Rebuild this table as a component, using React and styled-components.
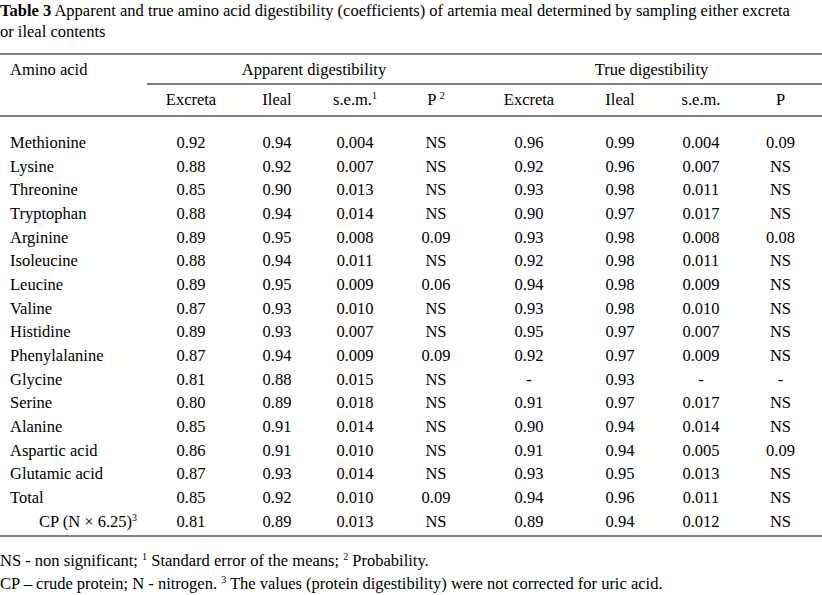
import React from 'react'
import styled, { createGlobalStyle, css } from 'styled-components'

const GlobalStyle = createGlobalStyle`
    body {
        margin: 0;
        background: #ffffff;
    }
`

const serif = css`
    font-family: "Liberation Serif", serif;
    font-size: 16.5px;
    color: #000;
`

const COLS = '147px 88px 84px 72px 90px 96px 86px 76px 83px'

const rows = [
    ['Methionine', '0.92', '0.94', '0.004', 'NS', '0.96', '0.99', '0.004', '0.09'],
    ['Lysine', '0.88', '0.92', '0.007', 'NS', '0.92', '0.96', '0.007', 'NS'],
    ['Threonine', '0.85', '0.90', '0.013', 'NS', '0.93', '0.98', '0.011', 'NS'],
    ['Tryptophan', '0.88', '0.94', '0.014', 'NS', '0.90', '0.97', '0.017', 'NS'],
    ['Arginine', '0.89', '0.95', '0.008', '0.09', '0.93', '0.98', '0.008', '0.08'],
    ['Isoleucine', '0.88', '0.94', '0.011', 'NS', '0.92', '0.98', '0.011', 'NS'],
    ['Leucine', '0.89', '0.95', '0.009', '0.06', '0.94', '0.98', '0.009', 'NS'],
    ['Valine', '0.87', '0.93', '0.010', 'NS', '0.93', '0.98', '0.010', 'NS'],
    ['Histidine', '0.89', '0.93', '0.007', 'NS', '0.95', '0.97', '0.007', 'NS'],
    ['Phenylalanine', '0.87', '0.94', '0.009', '0.09', '0.92', '0.97', '0.009', 'NS'],
    ['Glycine', '0.81', '0.88', '0.015', 'NS', '-', '0.93', '-', '-'],
    ['Serine', '0.80', '0.89', '0.018', 'NS', '0.91', '0.97', '0.017', 'NS'],
    ['Alanine', '0.85', '0.91', '0.014', 'NS', '0.90', '0.94', '0.014', 'NS'],
    ['Aspartic acid', '0.86', '0.91', '0.010', 'NS', '0.91', '0.94', '0.005', '0.09'],
    ['Glutamic acid', '0.87', '0.93', '0.014', 'NS', '0.93', '0.95', '0.013', 'NS'],
    ['Total', '0.85', '0.92', '0.010', '0.09', '0.94', '0.96', '0.011', 'NS'],
]

const cpRow = ['0.81', '0.89', '0.013', 'NS', '0.89', '0.94', '0.012', 'NS']

export default function App() {
    return (
        <Page>
            <GlobalStyle />
            <Caption>
                <Bold>Table 3</Bold> Apparent and true amino acid digestibility (coefficients) of artemia meal determined by sampling either excreta or ileal contents
            </Caption>

            <HeadTop>
                <NameCell>Amino acid</NameCell>
                <GroupCell>Apparent digestibility</GroupCell>
                <GroupCell>True digestibility</GroupCell>
            </HeadTop>
            <HeadSub>
                <span />
                <Cell>Excreta</Cell>
                <Cell>Ileal</Cell>
                <Cell>s.e.m.<Sup>1</Sup></Cell>
                <Cell>P <Sup>2</Sup></Cell>
                <Cell>Excreta</Cell>
                <Cell>Ileal</Cell>
                <Cell>s.e.m.</Cell>
                <Cell>P</Cell>
            </HeadSub>

            <Body>
                {rows.map((r) => (
                    <Row key={r[0]}>
                        <NameCell>{r[0]}</NameCell>
                        {r.slice(1).map((v, i) => (
                            <Cell key={i}>{v}</Cell>
                        ))}
                    </Row>
                ))}
                <Row>
                    <NameCell $indent>CP (N × 6.25)<Sup>3</Sup></NameCell>
                    {cpRow.map((v, i) => (
                        <Cell key={i}>{v}</Cell>
                    ))}
                </Row>
            </Body>

            <Notes>
                <NoteLine>NS - non significant; <Sup>1</Sup> Standard error of the means; <Sup>2</Sup> Probability.</NoteLine>
                <NoteLine>CP – crude protein; N - nitrogen. <Sup>3</Sup> The values (protein digestibility) were not corrected for uric acid.</NoteLine>
            </Notes>
        </Page>
    )
}

const Page = styled.div`
    width: 822px;
    height: 595px;
    overflow: hidden;
    ${serif}
`

const Caption = styled.div`
    ${serif}
    line-height: 21px;
    padding-right: 20px;
    margin-bottom: 11px;
`

const Bold = styled.span`
    font-weight: bold;
`

const HeadTop = styled.div`
    display: grid;
    grid-template-columns: 147px 334px 341px;
    border-top: 2px solid #808080;
    height: 30px;
    align-items: center;
`

const HeadSub = styled.div`
    display: grid;
    grid-template-columns: ${COLS};
    height: 30px;
    align-items: center;
    border-bottom: 2px solid #808080;
`

const GroupCell = styled.div`
    ${serif}
    text-align: center;
    height: 30px;
    line-height: 30px;
    border-bottom: 2px solid #808080;
    box-sizing: border-box;
`

const Body = styled.div`
    padding-top: 14px;
    padding-bottom: 1px;
    border-bottom: 2px solid #808080;
`

const Row = styled.div`
    display: grid;
    grid-template-columns: ${COLS};
    height: 23.7px;
    align-items: center;
`

const NameCell = styled.div`
    ${serif}
    padding-left: ${(p) => (p.$indent ? '39px' : '10px')};
    white-space: nowrap;
`

const Cell = styled.div`
    ${serif}
    text-align: center;
    white-space: nowrap;
`

const Sup = styled.sup`
    font-size: 10px;
    line-height: 0;
    vertical-align: 6px;
`

const Notes = styled.div`
    padding-top: 12px;
`

const NoteLine = styled.div`
    ${serif}
    line-height: 23px;
`
